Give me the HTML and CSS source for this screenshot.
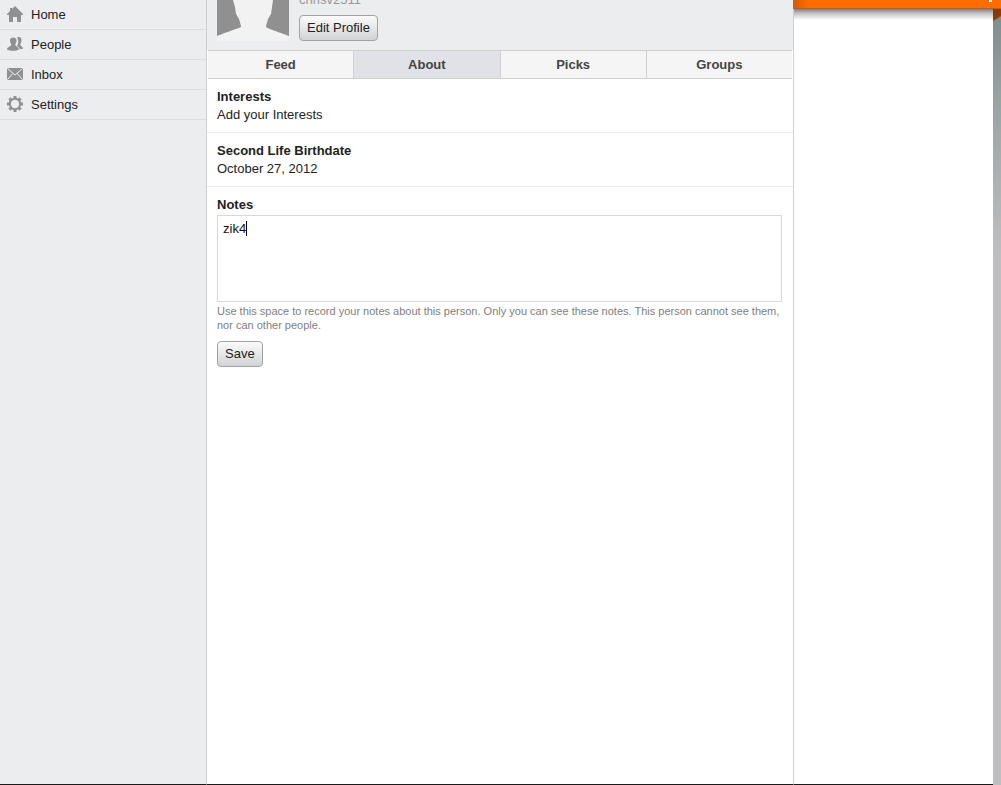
FILE: index.html
```html
<!DOCTYPE html>
<html lang="en">
<head>
<meta charset="utf-8">
<title>Profile</title>
<link rel="stylesheet" href="styles.css">
</head>
<body>
<div class="window">
  <nav class="sidebar">
    <a class="nav-item" href="#home">
      <svg class="nav-icon" viewBox="0 0 16 16"><path d="M8 0 16 8V9H14V16H10V11H6V16H2V9H0V8L3 5V2H5V3Z"/></svg>Home</a>
    <a class="nav-item" href="#people">
      <svg class="nav-icon" viewBox="0 0 16 16"><path d="M10 1.500C13 .2 15 1.800 14.400 5 14.300 6.500 13.500 7.600 13.200 8.500 13.200 10 16 10.200 16 12.800L12.800 13.200C12.500 11 10.500 10.800 10 10 11.500 8 12 4 10 1.500Z"/><path d="M3 4C3 .5 9.500.5 9.500 4 9.700 6 8.500 7.600 8.200 8.500 8.200 10.600 12 10.500 12 13.500 9 15.300 3 15.300 0 13.500 0 10.500 4.300 10.600 4.300 8.500 4 7.600 2.800 6 3 4Z"/></svg>People</a>
    <a class="nav-item" href="#inbox">
      <svg class="nav-icon" viewBox="0 0 16 16"><rect y="2" width="16" height="12" rx="1"/><path class="fold" d="M.5 2.500 8 9 15.500 2.500M.5 13.500 6 7.300M15.500 13.500 10 7.300"/></svg>Inbox</a>
    <a class="nav-item" href="#settings">
      <svg class="nav-icon" viewBox="0 0 16 16"><circle class="ring" cx="8" cy="8" r="5.200"/><path class="teeth" d="M8 0V3M8 13V16M0 8H3M13 8H16M2.400 2.400 4.300 4.300M11.700 11.700 13.600 13.600M2.400 13.600 4.300 11.700M11.700 4.300 13.600 2.400"/></svg>Settings</a>
  </nav>
  <main class="profile">
    <header class="profile-head">
      <svg class="avatar" viewBox="0 0 72 72"><rect width="72" height="72" fill="#909090"/><path d="M16 31C15 12 24 6 36 6S57 12 56 31L55 38 54 45 51 50 49 57C49 59 50 59 72 67V72H0V67C23 58 24 59 24 57L22 50 19 45 18 38Z" fill="#f2f2f2"/></svg>
      <div class="identity">
        <span class="username">chrisv2511</span>
        <button class="btn" type="button">Edit Profile</button>
      </div>
    </header>
    <nav class="tabs">
      <a class="tab" href="#feed">Feed</a>
      <a class="tab active" href="#about">About</a>
      <a class="tab" href="#picks">Picks</a>
      <a class="tab" href="#groups">Groups</a>
    </nav>
    <section class="block">
      <h2>Interests</h2>
      <p>Add your Interests</p>
    </section>
    <section class="block">
      <h2>Second Life Birthdate</h2>
      <p>October 27, 2012</p>
    </section>
    <form class="block notes">
      <h2><label for="notes">Notes</label></h2>
      <div class="field">
        <textarea id="notes">zik4</textarea>
        <span class="caret"></span>
      </div>
      <p class="hint">Use this space to record your notes about this person. Only you can see these notes. This person cannot see them, nor can other people.</p>
      <button class="btn" type="button">Save</button>
    </form>
  </main>
  <div class="backdrop"><div class="banner"><span class="speck"></span></div></div>
  <div class="edge"><svg class="corner" viewBox="0 0 8 12"><path d="M0 0H8V7L0 12Z" fill="#8a3a00"/><path d="M0 12 8 7" stroke="#c85400"/></svg></div>
</div>
</body>
</html>
```
FILE: styles.css
```css
* { box-sizing: border-box; }
body {
  margin: 0;
  overflow: hidden;
  background: #fff;
  color: #222;
  font: 13px/18px "Liberation Sans", Arial, sans-serif;
}
h2, p { margin: 0; font-size: 13px; }
.window { display: flex; min-height: 100vh; }
.sidebar {
  width: 207px;
  flex: none;
  background: #ebedef;
  border-right: 1px solid #cfcfcf;
  border-bottom: 1px solid #1a1a1a;
}
.nav-item {
  display: flex;
  align-items: center;
  gap: 8px;
  height: 30px;
  padding-left: 7px;
  border-bottom: 1px solid #dcdddf;
  color: #222;
  text-decoration: none;
}
.nav-icon { width: 16px; height: 16px; margin-bottom: 2px; fill: #8e9092; }
.fold { fill: none; stroke: #ebedef; stroke-width: 1; }
.nav-icon .ring { fill: none; stroke: #8e9092; stroke-width: 2; }
.teeth { stroke: #8e9092; stroke-width: 3; }
.profile {
  width: 587px;
  flex: none;
  border-right: 1px solid #cfcfcf;
  border-bottom: 1px solid #1a1a1a;
}
.profile-head {
  display: flex;
  align-items: flex-end;
  gap: 10px;
  height: 50px;
  padding: 0 10px 9px;
  background: #ebedef;
}
.avatar { width: 72px; height: 72px; flex: none; }
.identity { display: flex; flex-direction: column; align-items: flex-start; gap: 6px; }
.username { color: #999; }
.btn {
  height: 26px;
  padding: 0 7px;
  border: 1px solid #a2a3a5;
  border-radius: 4px;
  background: linear-gradient(#fbfbfb, #d2d3d5);
  color: #222;
  font: inherit;
}
.tabs {
  display: flex;
  margin: 0 1px;
  border: solid #d0d0d0;
  border-width: 1px 0;
}
.tab {
  flex: 1;
  padding: 5px 0 4px;
  border-right: 1px solid #d0d0d0;
  background: #f5f5f5;
  color: #444;
  font-weight: bold;
  text-align: center;
  text-decoration: none;
}
.tab:last-child { border-right: 0; }
.tab.active { background: #e1e2e8; }
.block { padding: 9px 10px 8px; border-bottom: 1px solid #ebebeb; }
.notes { border: 0; }
.field { position: relative; margin: 1px 0 2px; }
textarea {
  display: block;
  width: 100%;
  max-width: 565px;
  height: 87px;
  padding: 4px 5px;
  border: 1px solid #d8d8d8;
  outline: none;
  resize: none;
  color: #111;
  font: inherit;
}
.caret { position: absolute; left: 29px; top: 6px; width: 1px; height: 15px; background: #000; }
.hint { margin-bottom: 9px; color: #808080; font-size: 11px; line-height: 14px; }
.backdrop { flex: 1; border-bottom: 1px solid #1a1a1a; }
.banner {
  position: relative;
  height: 9px;
  margin: 0 -8px 0 -1px;
  border-bottom: 1px solid #d15800;
  background: linear-gradient(90deg, #d65b00, #ff6c00 16px);
}
.banner::after {
  content: "";
  position: absolute;
  top: 9px;
  left: 1px;
  right: 8px;
  height: 11px;
  background: linear-gradient(#808080, #c4c4c4 40%, #fff);
}
.speck { position: absolute; right: 9px; top: 0; width: 3px; height: 2px; background: #fff; }
.edge {
  width: 8px;
  margin-top: 9px;
  background: linear-gradient(#7b8d8b, #9ba5a5 100px, #bfbfc2 250px);
}
.corner { display: block; width: 8px; height: 12px; }
```
